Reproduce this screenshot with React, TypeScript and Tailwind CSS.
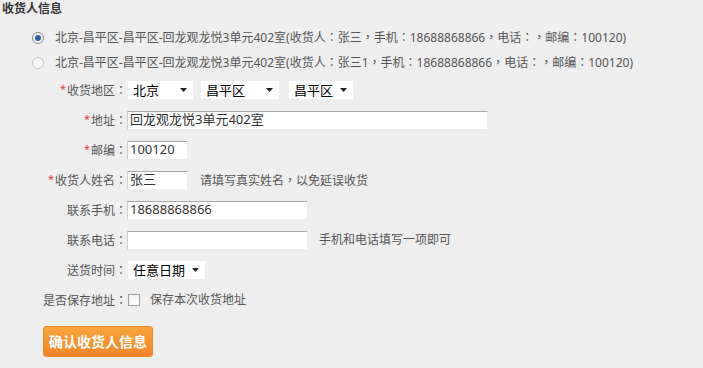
import React from 'react';

const FONT = '"Noto Sans", "Noto Sans CJK SC", sans-serif';

// full-width punctuation sits centred in its box, as in the original
function P({ children }: { children: string }) {
  const parts = children.split(/([：，])/);
  return (
    <>
      {parts.map((p, i) =>
        p === '：' || p === '，' ? (
          <span key={i} style={{ fontFamily: '"Noto Sans CJK TC", sans-serif' }}>
            {p}
          </span>
        ) : (
          <React.Fragment key={i}>{p}</React.Fragment>
        )
      )}
    </>
  );
}

function Caret() {
  return (
    <svg width="7" height="4" viewBox="0 0 7 4" className="shrink-0">
      <path d="M0 0h7L3.5 4z" fill="#222" />
    </svg>
  );
}

function FakeSelect({ value, width }: { value: string; width: string }) {
  return (
    <div
      className={`${width} h-[18px] bg-white flex items-center justify-between pl-[5px] pr-[6px] text-[13px] text-black leading-none`}
    >
      <span>{value}</span>
      <Caret />
    </div>
  );
}

function Field({ value = '', width }: { value?: string; width: string }) {
  return (
    <input
      readOnly
      value={value}
      className={`${width} h-[19px] bg-white border border-t-[#a8a8a8] border-l-[#d2d2d2] border-r-[#ececec] border-b-[#ececec] px-[2px] text-[13px] text-[#333] outline-none`}
      style={{ fontFamily: FONT }}
    />
  );
}

function Row({ label, required, children }: { label: string; required?: boolean; children: React.ReactNode }) {
  return (
    <div className="h-[30px] flex items-center">
      <div className="w-[127px] text-right whitespace-nowrap">
        {required && <span className="text-[#e4393c] text-[11px] relative -top-[2px] mr-[1px]">*</span>}
        <P>{label + '：'}</P>
      </div>
      {children}
    </div>
  );
}

function Radio({ checked }: { checked?: boolean }) {
  return (
    <span
      className={`w-[12px] h-[12px] rounded-full border flex items-center justify-center shrink-0 ${
        checked ? 'border-[#8a8a8a] bg-[#f4f4f4]' : 'border-[#c4c4c4] bg-[#f6f6f6]'
      }`}
    >
      {checked && <span className="w-[6px] h-[6px] rounded-full bg-[#2c5f9e]" />}
    </span>
  );
}

const ADDRS = [
  { text: '北京-昌平区-昌平区-回龙观龙悦3单元402室(收货人：张三，手机：18688868866，电话：，邮编：100120)', checked: true },
  { text: '北京-昌平区-昌平区-回龙观龙悦3单元402室(收货人：张三1，手机：18688868866，电话：，邮编：100120)' },
];

export default function App() {
  return (
    <div className="min-h-screen bg-[#eeeeee] text-[12px] text-[#555]" style={{ fontFamily: FONT }}>
      <h3 className="h-[18px] leading-[18px] pl-[2px] font-bold text-[12px] text-[#333]">收货人信息</h3>

      <div className="mt-[7px] pl-[32px]">
        {ADDRS.map((a, i) => (
          <div key={i} className="h-[25px] flex items-center gap-[11px] whitespace-nowrap">
            <Radio checked={a.checked} />
            <span>
              <P>{a.text}</P>
            </span>
          </div>
        ))}
      </div>

      <Row label="收货地区" required>
        <div className="flex items-center ml-[1px] gap-[8px]">
          <FakeSelect value="北京" width="w-[65px]" />
          <FakeSelect value="昌平区" width="w-[78px]" />
          <div className="ml-[2px]">
            <FakeSelect value="昌平区" width="w-[64px]" />
          </div>
        </div>
      </Row>
      <Row label="地址" required>
        <Field value="回龙观龙悦3单元402室" width="w-[361px]" />
      </Row>
      <Row label="邮编" required>
        <Field value="100120" width="w-[61px]" />
      </Row>
      <Row label="收货人姓名" required>
        <Field value="张三" width="w-[61px]" />
        <span className="ml-[12px]">
          <P>请填写真实姓名，以免延误收货</P>
        </span>
      </Row>
      <Row label="联系手机">
        <Field value="18688868866" width="w-[181px]" />
      </Row>
      <Row label="联系电话">
        <Field width="w-[181px]" />
        <span className="ml-[11px]">手机和电话填写一项即可</span>
      </Row>
      <Row label="送货时间">
        <div className="ml-[1px]">
          <FakeSelect value="任意日期" width="w-[77px]" />
        </div>
      </Row>
      <Row label="是否保存地址">
        <span className="ml-[1px] w-[12px] h-[12px] border border-[#a0a0a0] bg-gradient-to-b from-[#f0f0f0] to-white" />
        <span className="ml-[10px]">保存本次收货地址</span>
      </Row>

      <div className="pl-[43px] mt-[11px]">
        <button
          className="w-[110px] h-[31px] rounded-[3px] border border-[#ee8a2a] bg-gradient-to-b from-[#f9a63b] to-[#f08329] text-white font-bold text-[14px]"
          style={{ fontFamily: FONT }}
        >
          确认收货人信息
        </button>
      </div>
    </div>
  );
}
